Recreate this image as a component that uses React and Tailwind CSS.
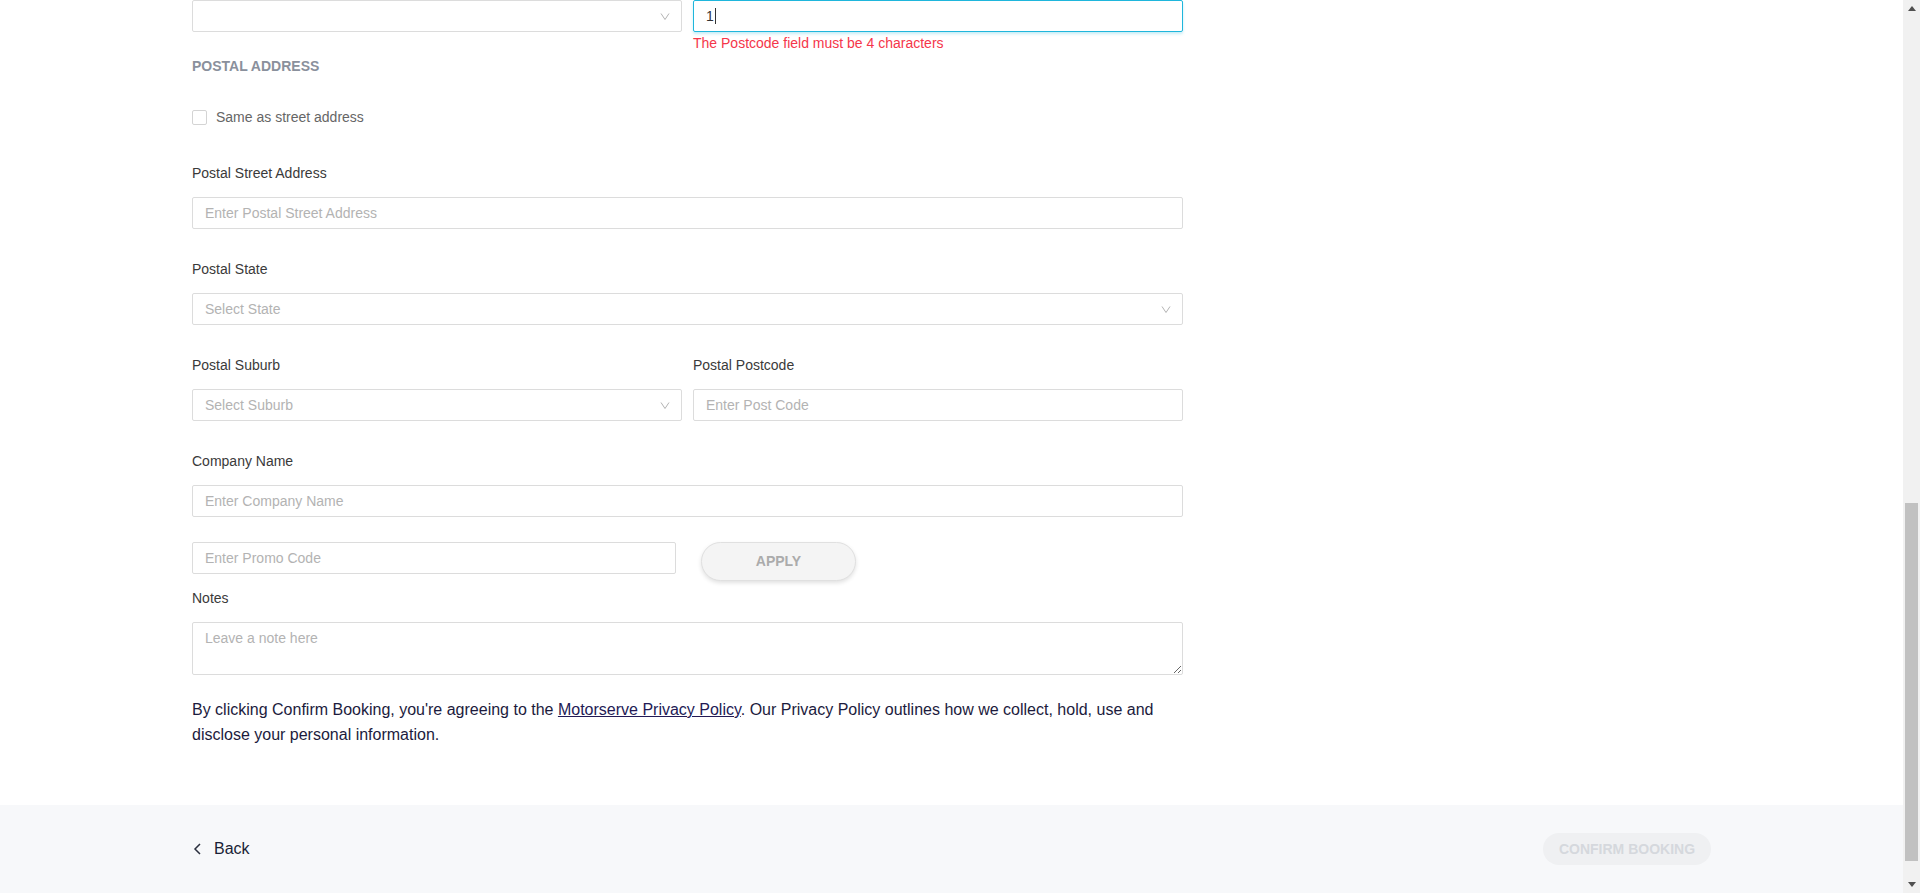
import React from "react";

const Chevron = () => (
  <svg width="10" height="7" viewBox="0 0 10 7" fill="none" className="shrink-0">
    <path d="M1 0.5l4 6 4-6" stroke="#b3b3b3" strokeWidth="1" />
  </svg>
);

const TextInput = ({ placeholder, className = "" }) => (
  <input
    placeholder={placeholder}
    className={`h-8 w-full rounded-[2px] border border-[#dcdcdc] bg-white px-3 text-[14px] text-[#333] outline-none placeholder:text-[#b3b3b3] ${className}`}
  />
);

const Select = ({ placeholder }) => (
  <div className="flex h-8 w-full items-center justify-between rounded-[2px] border border-[#dcdcdc] bg-white pl-3 pr-[11px] text-[14px] text-[#b3b3b3]">
    <span>{placeholder}</span>
    <Chevron />
  </div>
);

const Label = ({ children }) => (
  <div className="mb-4 text-[14px] leading-4 text-[#3a3a3a]">{children}</div>
);

export default function App() {
  return (
    <div className="flex h-[893px] overflow-hidden bg-white font-['Liberation_Sans',Arial,sans-serif]">
      <div className="flex flex-1 flex-col">
        <main className="flex-1">
          <div className="mx-auto w-[1519px]">
            <div className="w-[991px]">
              {/* Row carried over from street address */}
              <div className="grid grid-cols-2 gap-[11px]">
                <div>
                  <Select placeholder="" />
                </div>
                <div>
                  <div className="flex h-8 items-center rounded-[2px] border border-[#1fb6dc] bg-white px-3 text-[14px] text-[#333] shadow-[0_2px_3px_rgba(31,182,220,0.25)]">
                    <span>1</span>
                    <span className="ml-px h-4 w-px bg-[#333]" />
                  </div>
                  <div className="mt-[3px] text-[14px] leading-4 text-[#f5364a]">
                    The Postcode field must be 4 characters
                  </div>
                </div>
              </div>

              <div className="mt-[7px] text-[14px] font-bold uppercase leading-4 text-[#8a909c]">
                Postal Address
              </div>

              <label className="mt-[36px] flex h-[15px] items-center gap-[9px]">
                <span className="h-[15px] w-[15px] rounded-[2px] border border-[#d4d4d4] bg-white" />
                <span className="text-[14px] text-[#666]">Same as street address</span>
              </label>

              <div className="mt-10">
                <Label>Postal Street Address</Label>
                <TextInput placeholder="Enter Postal Street Address" />
              </div>

              <div className="mt-8">
                <Label>Postal State</Label>
                <Select placeholder="Select State" />
              </div>

              <div className="mt-8 grid grid-cols-2 gap-[11px]">
                <div>
                  <Label>Postal Suburb</Label>
                  <Select placeholder="Select Suburb" />
                </div>
                <div>
                  <Label>Postal Postcode</Label>
                  <TextInput placeholder="Enter Post Code" />
                </div>
              </div>

              <div className="mt-8">
                <Label>Company Name</Label>
                <TextInput placeholder="Enter Company Name" />
              </div>

              <div className="mt-[25px] flex items-start gap-[25px]">
                <div className="w-[484px]">
                  <TextInput placeholder="Enter Promo Code" />
                </div>
                <button className="h-[39px] w-[155px] rounded-full border border-[#e0e0e0] bg-[#f4f4f4] text-[14px] font-bold text-[#ababab] shadow-[0_2px_4px_rgba(0,0,0,0.12)]">
                  APPLY
                </button>
              </div>

              <div className="mt-[9px]">
                <Label>Notes</Label>
                <textarea
                  placeholder="Leave a note here"
                  className="block h-[53px] w-full rounded-[2px] border border-[#dcdcdc] bg-white px-3 pt-[7px] text-[14px] leading-4 text-[#333] outline-none placeholder:text-[#b3b3b3]"
                />
              </div>

              <p className="mt-[22px] text-[16px] leading-[25px] text-[#1c1b3d]">
                By clicking Confirm Booking, you're agreeing to the{" "}
                <a href="#" className="text-[#231a55] underline">Motorserve Privacy Policy</a>. Our Privacy
                Policy outlines how we collect, hold, use and disclose your personal information.
              </p>
            </div>
          </div>
        </main>

        <footer className="h-[88px] bg-[#f7f8fa]">
          <div className="mx-auto flex h-full w-[1519px] items-center justify-between">
            <button className="flex items-center gap-[11px] text-[16px] text-[#1a1f36]">
              <svg width="11" height="12" viewBox="0 0 11 12" fill="none">
                <path d="M8 1L3 6l5 5" stroke="#2b2f3e" strokeWidth="1.5" />
              </svg>
              Back
            </button>
            <button className="h-8 w-[168px] rounded-full bg-[#eff0f2] text-[14px] font-bold text-[#d5d8dd]">
              CONFIRM BOOKING
            </button>
          </div>
        </footer>
      </div>

      {/* Scrollbar */}
      <div className="flex w-[17px] flex-col bg-[#f1f1f1]">
        <div className="flex h-[17px] items-center justify-center">
          <svg width="8" height="5" viewBox="0 0 8 5"><path d="M4 0L8 5H0z" fill="#505050" /></svg>
        </div>
        <div className="flex-1">
          <div className="mx-[2px] mt-[486px] h-[358px] bg-[#c1c1c1]" />
        </div>
        <div className="flex h-[17px] items-center justify-center">
          <svg width="8" height="5" viewBox="0 0 8 5"><path d="M0 0H8L4 5z" fill="#505050" /></svg>
        </div>
      </div>
    </div>
  );
}
